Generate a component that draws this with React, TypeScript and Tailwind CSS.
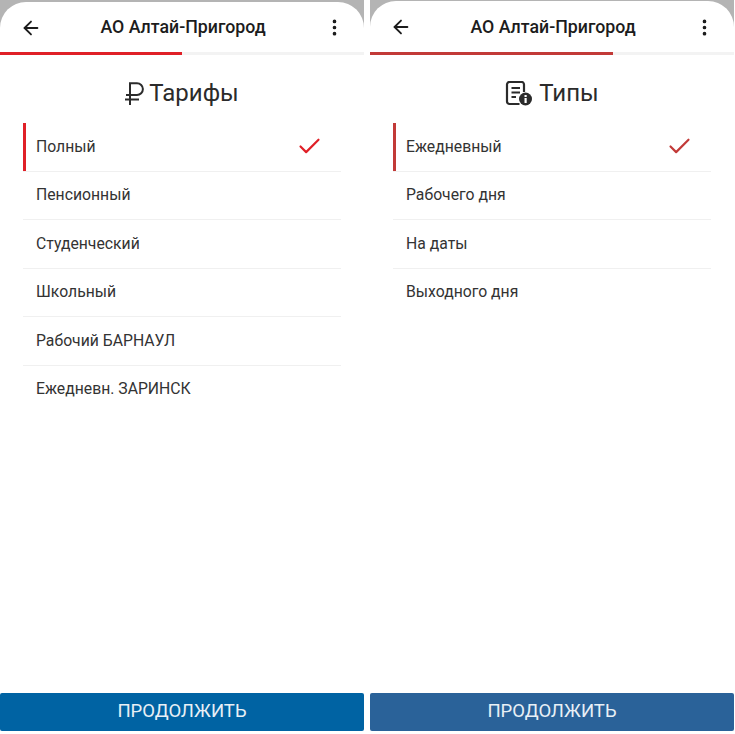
import { ArrowLeft, Check, EllipsisVertical } from 'lucide-react'

interface PanelProps {
  title: string
  icon: React.ReactNode
  items: string[]
  accent: string
  button: string
  progress: string
  topStrip: string
}

const TARIFFS = ['Полный', 'Пенсионный', 'Студенческий', 'Школьный', 'Рабочий БАРНАУЛ', 'Ежедневн. ЗАРИНСК']
const TYPES = ['Ежедневный', 'Рабочего дня', 'На даты', 'Выходного дня']

function RubleIcon() {
  return (
    <svg width="19" height="23" viewBox="0 0 19 23" fill="none" stroke="#2b2b2b" strokeWidth="2">
      <path d="M5 23V1.2h7a5.9 5.9 0 0 1 0 11.8H1" />
      <path d="M0 17.5h14" />
    </svg>
  )
}

function DocInfoIcon() {
  return (
    <svg width="28" height="25" viewBox="0 0 27 25" fill="none" className="text-[#2b2b2b] mr-[1px]">
      <path d="M14 23H4a2.5 2.5 0 0 1-2.5-2.5V3.5A2.5 2.5 0 0 1 4 1h12a2.5 2.5 0 0 1 2.5 2.5V11" stroke="currentColor" strokeWidth="2.2" />
      <path d="M6 7h8.5M6 11.5h8.5M6 16h4.5" stroke="currentColor" strokeWidth="2.2" />
      <circle cx="20" cy="18" r="6.5" fill="currentColor" />
      <rect x="19" y="17" width="2.2" height="5" fill="white" />
      <rect x="19" y="14" width="2.2" height="2" fill="white" />
    </svg>
  )
}

function Panel({ title, icon, items, accent, button, progress, topStrip }: PanelProps) {
  return (
    <div className="flex flex-col h-[734px] w-[364px] bg-white">
      <div className={`h-[52px] bg-[#b4b4b4] ${topStrip}`}>
        <div className="h-full flex items-center justify-between pl-[20px] pr-[19px] pt-[1px] rounded-t-[26px] bg-white">
          <ArrowLeft size={22} strokeWidth={2} className="text-[#1c1c1c]" />
          <span className="text-[17.75px] font-medium text-[#1c1c1c]">АО Алтай-Пригород</span>
          <EllipsisVertical size={21} strokeWidth={2.2} className="text-[#1c1c1c]" />
        </div>
      </div>
      <div className="h-[3px] bg-[#f3f3f3]">
        <div className={`h-full ${progress}`} style={{ backgroundColor: accent }} />
      </div>
      <div className="flex items-center justify-center gap-[5px] mt-[20px] h-[36px] text-[24px] text-[#2b2b2b]">
        {icon}
        <span>{title}</span>
      </div>
      <ul className="mt-[12px] mx-[23px]">
        {items.map((item, i) => (
          <li
            key={item}
            className="relative flex items-center justify-between h-[48.5px] pl-[13px] pr-[18px] border-b border-[#f0f0f0] text-[15.75px] text-[#333333] last:border-transparent"
          >
            {i === 0 && <span className="absolute left-0 top-0 bottom-0 w-[3px]" style={{ backgroundColor: accent }} />}
            <span>{item}</span>
            {i === 0 && <Check size={27} strokeWidth={1.9} style={{ color: accent }} />}
          </li>
        ))}
      </ul>
      <button className={`mt-auto mb-[3px] h-[38px] rounded-[2px] text-[18.5px] text-[#e8f0f6] ${button}`}>ПРОДОЛЖИТЬ</button>
    </div>
  )
}

export default function App() {
  return (
    <div className="w-[735px] h-[734px] bg-white flex gap-[6px] font-['Roboto',sans-serif] overflow-hidden">
      <Panel
        title="Тарифы"
        icon={<RubleIcon />}
        items={TARIFFS}
        accent="#e02027"
        button="bg-[#0063a3]"
        progress="w-[182px]"
        topStrip="pt-[2px]"
      />
      <Panel
        title="Типы"
        icon={<DocInfoIcon />}
        items={TYPES}
        accent="#c23a38"
        button="bg-[#2a6299]"
        progress="w-[243px]"
        topStrip="pt-[1px]"
      />
    </div>
  )
}
